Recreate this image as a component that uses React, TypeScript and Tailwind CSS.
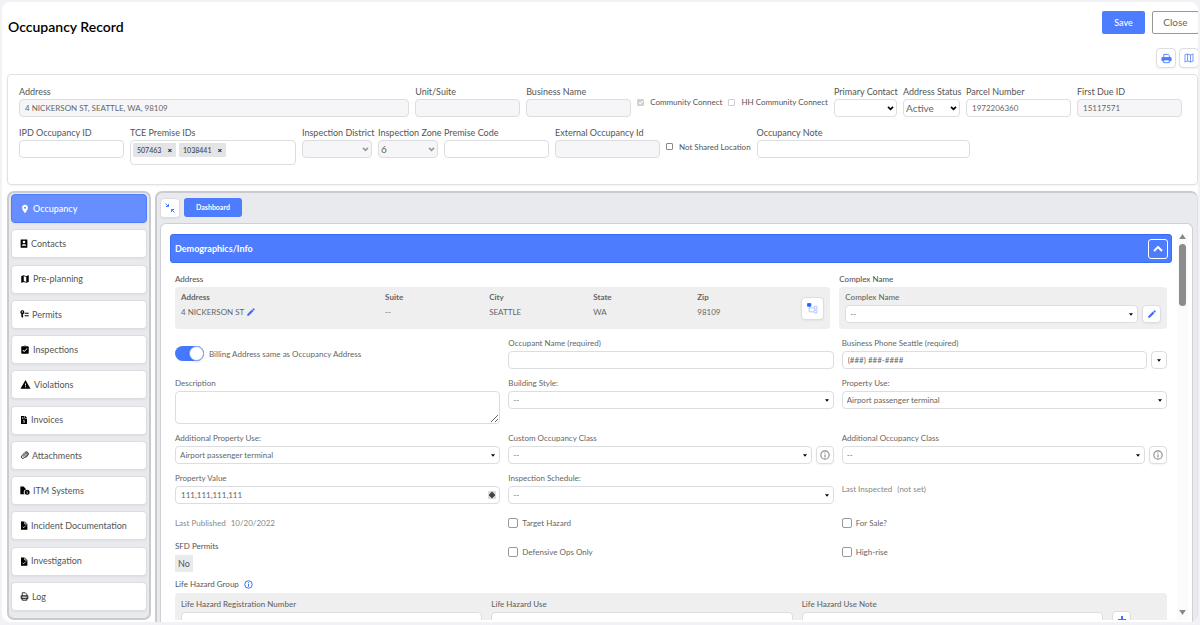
import { useId, useState } from 'react';
import type { ReactNode } from 'react';
import {
  MdAssignmentTurnedIn,
  MdEdit,
  MdLocationOn,
  MdMap,
  MdOutlineMap,
  MdWarning,
} from 'react-icons/md';
import { FaFileInvoiceDollar } from 'react-icons/fa';

const fieldBase = 'w-full rounded-[4px] border border-[#dcdde1] text-[#666] outline-none';

/* ---------- Icons ---------- */

function ContactIcon() {
  return (
    <svg viewBox="0 0 20 24" className="h-[9px] w-[8px]">
      <path d="M2 1h16a1 1 0 0 1 1 1v20a1 1 0 0 1-1 1H2a1 1 0 0 1-1-1V2a1 1 0 0 1 1-1z" fill="currentColor" />
      <circle cx="10" cy="8" r="3.500" fill="white" />
      <path d="M4 18c0-3 3-4 6-4s6 1 6 4z" fill="white" />
    </svg>
  );
}

function PermitIcon() {
  return (
    <svg viewBox="0 0 27 24" className="h-[8px] w-[9px]" fill="currentColor">
      <path d="M7 1a6 6 0 0 0-3 11.200V20l3 3 3-3-2-2 2-2-2-2 2-1.800A6 6 0 0 0 7 1Zm0 3a2 2 0 1 1 0 4 2 2 0 0 1 0-4Z" />
      <path d="M14 8h12v3H14zM14 16h12v3H14z" />
    </svg>
  );
}

function PaperclipIcon() {
  return (
    <svg viewBox="0 0 24 24" className="h-[9px] w-[9px]" fill="none" stroke="currentColor" strokeWidth="2.200">
      <path d="M8 15l8-9a2 2 0 0 1 3 3l-9 10a4 4 0 0 1-6-5l9-10a5 5 0 0 1 8 7l-6 7" />
    </svg>
  );
}

function SystemsIcon() {
  return (
    <svg viewBox="0 0 28 24" className="h-[9px] w-[10px]" fill="currentColor">
      <path d="M1 1h9l6 6v3a7 7 0 0 0-3 12.500H1z" />
      <path d="M20 10a7 7 0 1 0 0 14 7 7 0 0 0 0-14Zm-1 3h2v2h-2zm0 3h2v5h-2z" />
    </svg>
  );
}

function DocumentCheckIcon() {
  return (
    <svg viewBox="0 0 20 24" className="h-[9px] w-[8px]">
      <path d="M2 1h10l7 7v15H2z" fill="currentColor" />
      <path d="M6 15l3 3 6-6M12 1v7h7" fill="none" stroke="white" strokeWidth="2" />
    </svg>
  );
}

function LogIcon() {
  return (
    <svg viewBox="0 0 22 24" className="h-[9px] w-[9px]" fill="none" stroke="currentColor" strokeWidth="2">
      <path d="M5 10V2h8l4 4v4M5 18v4h12v-4" />
      <path d="M2 10h18v8H2z" fill="currentColor" fillOpacity="0.500" />
      <path d="M6 14h10" stroke="white" />
    </svg>
  );
}

function PrintIcon() {
  return (
    <svg viewBox="0 0 24 24" className="h-[11px] w-[11px]" fill="none" stroke="#4d7cff" strokeWidth="2">
      <path d="M6 9V3h10l2 2v4" />
      <path d="M2 10h20v7H2z" fill="#4d7cff" />
      <path d="M6 15h12v6H6z" fill="white" />
    </svg>
  );
}

function Caret({ className = '' }: { className?: string }) {
  return (
    <svg viewBox="0 0 6 4" className={`h-[3px] w-[4px] fill-black ${className}`}>
      <path d="M0 0h6L3 4z" />
    </svg>
  );
}

function InfoIcon({ className }: { className: string }) {
  return (
    <svg viewBox="0 0 18 18" className={className} fill="none" stroke="currentColor">
      <circle cx="9" cy="9" r="7.500" strokeWidth="2" />
      <path d="M9 8v5.500M9 4.500v2" strokeWidth="2" />
    </svg>
  );
}

/* ---------- Header fields ---------- */

interface HeaderFieldProps {
  label: string;
  width: string;
  value?: string;
  disabled?: boolean;
}

function HeaderInput({ label, width, value = '', disabled = false }: HeaderFieldProps) {
  const id = useId();
  return (
    <div className={width}>
      <label htmlFor={id} className="block text-[9px] leading-[14px] whitespace-nowrap text-[#555]">
        {label}
      </label>
      <input
        id={id}
        type="text"
        defaultValue={value}
        disabled={disabled}
        className={`${fieldBase} block h-[18px] px-[5px] text-[8px] ${
          disabled ? 'bg-[#f6f6f9] text-[#8a8d92]' : 'bg-white'
        }`}
      />
    </div>
  );
}

function HeaderSelect({ label, width, value = '', disabled = false }: HeaderFieldProps) {
  const id = useId();
  return (
    <div className={width}>
      <label htmlFor={id} className="block text-[9px] leading-[14px] whitespace-nowrap text-[#555]">
        {label}
      </label>
      <div className="relative">
        <select
          id={id}
          defaultValue={value}
          disabled={disabled}
          className={`${fieldBase} block h-[18px] appearance-none px-[2px] text-[10px] ${
            disabled ? 'bg-[#f6f6f9] text-[#8a8d92] opacity-100' : 'bg-white'
          }`}
        >
          <option value={value}>{value}</option>
        </select>
        <svg
          viewBox="0 0 8 6"
          className={`pointer-events-none absolute top-[7px] right-[3px] h-[5px] w-[7px] ${
            disabled ? 'text-[#999]' : 'text-black'
          }`}
          fill="none"
          stroke="currentColor"
          strokeWidth="2"
        >
          <path d="M1 1l3 3 3-3" />
        </svg>
      </div>
    </div>
  );
}

interface HeaderCheckProps {
  label: string;
  checked?: boolean;
  disabled?: boolean;
}

function HeaderCheck({ label, checked = false, disabled = false }: HeaderCheckProps) {
  return (
    <label className="flex items-center gap-[6px] self-center pt-[2px] text-[8px] leading-[12px] whitespace-nowrap text-[#555]">
      <span className="relative flex">
        <input
          type="checkbox"
          defaultChecked={checked}
          disabled={disabled}
          className={`h-[7px] w-[7px] appearance-none rounded-[1px] border ${
            disabled ? 'border-[#d0d0d0] checked:bg-[#d0d0d0]' : 'border-[#888]'
          }`}
        />
        {checked && (
          <svg viewBox="0 0 8 8" className="absolute inset-0 h-[7px] w-[7px]" fill="none" stroke="white" strokeWidth="1.200">
            <path d="M2 4l1.500 1.500L6.500 2.500" />
          </svg>
        )}
      </span>
      {label}
    </label>
  );
}

function PremiseIds() {
  const [ids, setIds] = useState(['507463', '1038441']);
  return (
    <div className="w-[166px]">
      <div className="text-[9px] leading-[14px] text-[#555]">TCE Premise IDs</div>
      <div className="flex h-[25px] gap-[3px] rounded-[4px] border border-[#dcdde1] p-[2px]">
        {ids.map((id) => (
          <span key={id} className="flex h-[14px] items-center gap-[6px] rounded-[1px] bg-[#e4e4e6] px-[4px] text-[7px] font-medium text-[#444]">
            {id}
            <button
              type="button"
              aria-label={`Remove ${id}`}
              onClick={() => setIds(ids.filter((other) => other !== id))}
              className="text-[8px] leading-none font-bold text-black"
            >
              ×
            </button>
          </span>
        ))}
      </div>
    </div>
  );
}

/* ---------- Form fields ---------- */

interface FormFieldProps {
  label: string;
  strong?: boolean;
  children: (id: string) => ReactNode;
}

function FormField({ label, strong = false, children }: FormFieldProps) {
  const id = useId();
  return (
    <div className="min-w-0">
      <label
        htmlFor={id}
        className={`mb-[3px] block text-[8px] leading-[10px] whitespace-nowrap text-[#666] ${
          strong ? 'font-medium' : ''
        }`}
      >
        {label}
      </label>
      {children(id)}
    </div>
  );
}

function FormSelect({ id, value = '--' }: { id: string; value?: string }) {
  return (
    <div className="relative min-w-0 flex-1">
      <select
        id={id}
        defaultValue={value}
        className={`${fieldBase} block h-[18px] appearance-none bg-white px-[4px] text-[8px]`}
      >
        <option value={value}>{value}</option>
      </select>
      <Caret className="pointer-events-none absolute top-[8px] right-[5px]" />
    </div>
  );
}

function InfoButton() {
  return (
    <button
      type="button"
      aria-label="Info"
      className="flex h-[18px] w-[18px] items-center justify-center rounded-[4px] border border-[#dcdde1] bg-white text-[#888] shadow-xs"
    >
      <InfoIcon className="h-[10px] w-[10px]" />
    </button>
  );
}

function FormCheck({ label }: { label: string }) {
  return (
    <label className="flex items-center gap-[4px] text-[8px] leading-[12px] text-[#666]">
      <input type="checkbox" className="h-[10px] w-[10px] appearance-none rounded-[2px] border border-[#999] bg-white" />
      {label}
    </label>
  );
}

/* ---------- Sections ---------- */

const menu = [
  { label: 'Occupancy', icon: <MdLocationOn size={10} />, active: true },
  { label: 'Contacts', icon: <ContactIcon /> },
  { label: 'Pre-planning', icon: <MdMap size={10} /> },
  { label: 'Permits', icon: <PermitIcon /> },
  { label: 'Inspections', icon: <MdAssignmentTurnedIn size={10} /> },
  { label: 'Violations', icon: <MdWarning size={11} /> },
  { label: 'Invoices', icon: <FaFileInvoiceDollar size={8} /> },
  { label: 'Attachments', icon: <PaperclipIcon /> },
  { label: 'ITM Systems', icon: <SystemsIcon /> },
  { label: 'Incident Documentation', icon: <DocumentCheckIcon /> },
  { label: 'Investigation', icon: <DocumentCheckIcon /> },
  { label: 'Log', icon: <LogIcon /> },
];

function Sidebar() {
  return (
    <nav className="mb-[2px] flex w-[144px] flex-none flex-col justify-between rounded-[7px] border-2 border-[#c9cbd0] bg-[#e9eaee] px-[2px] pt-[1px] pb-[7px]">
      {menu.map((item) => (
        <a
          key={item.label}
          href="#"
          className={`flex h-[29px] items-center gap-[3px] rounded-[4px] border px-[8px] text-[9px] shadow-xs ${
            item.active
              ? 'border-[#4d7cff] bg-[#668eff] font-medium text-white'
              : 'border-[#dcdde1] bg-white text-[#555]'
          }`}
        >
          <span className={item.active ? 'text-white' : 'text-black'}>{item.icon}</span>
          {item.label}
        </a>
      ))}
    </nav>
  );
}

function AddressSection() {
  const columns = [
    { title: 'Suite', value: '--' },
    { title: 'City', value: 'SEATTLE' },
    { title: 'State', value: 'WA' },
    { title: 'Zip', value: '98109' },
  ];
  return (
    <div className="flex gap-[9px]">
      <section className="min-w-0 flex-[2]">
        <h3 className="mb-[1px] text-[8px] leading-[14px] font-medium text-[#555]">Address</h3>
        <div className="flex h-[42px] rounded-[4px] bg-[#efefef] px-[6px] pt-[3px] text-[8px] text-[#666]">
          <dl className="grid flex-1 grid-cols-[204fr_104fr_104fr_104fr_104fr]">
            <div>
              <dt className="mb-[2px] leading-[14px] font-bold">Address</dt>
              <dd className="flex items-center gap-[2px] leading-[12px]">
                4 NICKERSON ST
                <MdEdit size={10} className="text-[#3f6fff]" />
              </dd>
            </div>
            {columns.map((column) => (
              <div key={column.title}>
                <dt className="mb-[2px] leading-[14px] font-bold">{column.title}</dt>
                <dd className="leading-[12px]">{column.value}</dd>
              </div>
            ))}
          </dl>
          <button
            type="button"
            aria-label="Show hierarchy"
            className="mt-[7px] flex h-[23px] w-[23px] items-center justify-center rounded-[4px] border border-[#dcdde1] bg-white shadow-xs"
          >
            <svg viewBox="0 0 20 20" className="h-[11px] w-[11px]" fill="none" stroke="#a9bcff" strokeWidth="1.500">
              <path d="M1 1h6v5H1z" fill="#2563ff" stroke="#2563ff" />
              <path d="M4 7v9h8M4 9h8M13 6h5v5h-5zM13 13h5v5h-5z" />
            </svg>
          </button>
        </div>
      </section>

      <section className="min-w-0 flex-1">
        <h3 className="mb-[1px] text-[8px] leading-[14px] font-medium text-[#555]">Complex Name</h3>
        <div className="h-[42px] rounded-[4px] bg-[#efefef] px-[6px] pt-[5px]">
          <FormField label="Complex Name" strong>
            {(id) => (
              <div className="flex gap-[4px]">
                <FormSelect id={id} />
                <button
                  type="button"
                  aria-label="Edit complex"
                  className="flex h-[18px] w-[19px] items-center justify-center rounded-[4px] border border-[#dcdde1] bg-white text-[#3f6fff] shadow-xs"
                >
                  <MdEdit size={10} />
                </button>
              </div>
            )}
          </FormField>
        </div>
      </section>
    </div>
  );
}

function LifeHazardSection() {
  return (
    <section>
      <h3 className="mb-[3px] flex items-center gap-[5px] text-[8px] leading-[12px] text-[#555]">
        Life Hazard Group
        <InfoIcon className="h-[9px] w-[9px] text-[#3f6fff]" />
      </h3>
      <div className="flex gap-[9px] rounded-[4px] bg-[#efefef] px-[6px] pt-[6px] pb-[12px]">
        <div className="grid flex-1 grid-cols-3 gap-[9px]">
          <FormField label="Life Hazard Registration Number" strong>
            {(id) => <input id={id} type="text" className={`${fieldBase} block h-[18px] bg-white px-[5px] text-[8px]`} />}
          </FormField>
          <FormField label="Life Hazard Use" strong>
            {(id) => <FormSelect id={id} value="" />}
          </FormField>
          <FormField label="Life Hazard Use Note" strong>
            {(id) => <input id={id} type="text" className={`${fieldBase} block h-[18px] bg-white px-[5px] text-[8px]`} />}
          </FormField>
        </div>
        <button
          type="button"
          aria-label="Add life hazard"
          className="mt-[12px] mr-[30px] flex h-[18px] w-[19px] items-center justify-center rounded-[4px] border border-[#dcdde1] bg-white"
        >
          <svg viewBox="0 0 8 8" className="h-[8px] w-[8px]" fill="none" stroke="#3f6fff" strokeWidth="2">
            <path d="M4 0v8M0 4h8" />
          </svg>
        </button>
      </div>
    </section>
  );
}

function OccupancyForm() {
  const [sameBilling, setSameBilling] = useState(true);
  return (
    <div className="grid grid-cols-3 gap-x-[8px] gap-y-[9px]">
      <label className="flex items-center gap-[5px] text-[8px] text-[#666]">
        <input
          type="checkbox"
          role="switch"
          checked={sameBilling}
          onChange={(e) => setSameBilling(e.target.checked)}
          className="peer sr-only"
        />
        <span className="flex h-[15px] w-[29px] items-center rounded-full bg-[#bbb] peer-checked:justify-end peer-checked:bg-[#4478ff]">
          <span className="h-[15px] w-[15px] rounded-full border border-[#8aa6e8] bg-white shadow-sm" />
        </span>
        Billing Address same as Occupancy Address
      </label>
      <FormField label="Occupant Name (required)">
        {(id) => <input id={id} type="text" className={`${fieldBase} block h-[18px] px-[5px] text-[8px]`} />}
      </FormField>
      <FormField label="Business Phone Seattle (required)">
        {(id) => (
          <div className="flex gap-[4px]">
            <input
              id={id}
              type="tel"
              placeholder="(###) ###-####"
              className={`${fieldBase} block h-[18px] flex-1 px-[5px] text-[8px] placeholder:text-[#666]`}
            />
            <button
              type="button"
              aria-label="Phone type"
              className="flex h-[18px] w-[16px] flex-none items-center justify-center rounded-[4px] border border-[#dcdde1]"
            >
              <Caret />
            </button>
          </div>
        )}
      </FormField>

      <FormField label="Description">
        {(id) => <textarea id={id} className={`${fieldBase} block h-[33px] px-[5px] text-[8px]`} />}
      </FormField>
      <FormField label="Building Style:">{(id) => <FormSelect id={id} />}</FormField>
      <FormField label="Property Use:">{(id) => <FormSelect id={id} value="Airport passenger terminal" />}</FormField>

      <FormField label="Additional Property Use:">
        {(id) => <FormSelect id={id} value="Airport passenger terminal" />}
      </FormField>
      <FormField label="Custom Occupancy Class">
        {(id) => (
          <div className="flex gap-[4px]">
            <FormSelect id={id} />
            <InfoButton />
          </div>
        )}
      </FormField>
      <FormField label="Additional Occupancy Class">
        {(id) => (
          <div className="flex gap-[4px]">
            <FormSelect id={id} />
            <InfoButton />
          </div>
        )}
      </FormField>

      <FormField label="Property Value">
        {(id) => (
          <div className="relative">
            <input
              id={id}
              type="text"
              defaultValue="111,111,111,111"
              className={`${fieldBase} block h-[18px] px-[5px] text-[8px]`}
            />
            <svg viewBox="0 0 8 8" className="absolute top-[5px] right-[4px] h-[8px] w-[8px]">
              <path d="M0 0h8v8H0z" fill="#ddd" />
              <path d="M4 0.500l3 3v1l-3 3-3-3v-1z" fill="#444" />
            </svg>
          </div>
        )}
      </FormField>
      <FormField label="Inspection Schedule:">{(id) => <FormSelect id={id} />}</FormField>
      <p className="flex items-center gap-[5px] text-[8px] text-[#888]">
        Last Inspected <span>(not set)</span>
      </p>
    </div>
  );
}

function FlagsSection() {
  return (
    <div className="grid grid-cols-3 gap-x-[8px] pt-[13px] pb-[6px]">
      <div>
        <p className="flex items-center gap-[5px] text-[8px] leading-[12px] text-[#888]">
          Last Published <span>10/20/2022</span>
        </p>
        <h3 className="mt-[11px] mb-[3px] text-[8px] leading-[12px] text-[#555]">SFD Permits</h3>
        <span className="block w-fit bg-[#e9eaee] px-[3px] text-[9px] leading-[17px] text-[#555]">No</span>
      </div>
      <div className="flex flex-col gap-[17px]">
        <FormCheck label="Target Hazard" />
        <FormCheck label="Defensive Ops Only" />
      </div>
      <div className="flex flex-col gap-[17px]">
        <FormCheck label="For Sale?" />
        <FormCheck label="High-rise" />
      </div>
    </div>
  );
}

export default function App() {
  const iconButton =
    'flex h-[20px] w-[20px] items-center justify-center rounded-[4px] border border-[#dcdde1] bg-white text-[#7a9bff] shadow-xs';

  return (
    <div className="h-screen bg-[#f1f1f6] p-[2px] pb-[3px] font-['Lato',sans-serif]">
      <main className="flex h-full flex-col overflow-hidden rounded-[8px] bg-white pl-[5px]">
        {/* Title and actions */}
        <header className="flex h-[72px] flex-none justify-between">
          <h1 className="mt-[15px] pl-[1px] text-[14px] leading-[20px] font-semibold text-black">Occupancy Record</h1>
          <div className="-mr-[1px] flex flex-col items-end">
            <div className="mt-[9px] flex gap-[7px]">
              <button type="button" className="h-[23px] w-[43px] rounded-[2px] bg-[#4d7cff] text-[9px] font-medium text-white">
                Save
              </button>
              <button type="button" className="h-[23px] w-[47px] rounded-[2px] border border-[#999] text-[10px] text-[#666]">
                Close
              </button>
            </div>
            <div className="mt-[14px] flex gap-[3px]">
              <button type="button" aria-label="Print" className={iconButton}>
                <PrintIcon />
              </button>
              <button type="button" aria-label="Map" className={iconButton}>
                <MdOutlineMap size={12} />
              </button>
            </div>
          </div>
        </header>

        {/* Record summary */}
        <section className="flex h-[111px] flex-none flex-col gap-[9px] rounded-[4px] border border-[#e0e1e4] pt-[10px] pr-[15px] pl-[11px] shadow-xs">
          <div className="flex items-start gap-[6px]">
            <HeaderInput label="Address" width="flex-1" value="4 NICKERSON ST, SEATTLE, WA, 98109" disabled />
            <HeaderInput label="Unit/Suite" width="w-[105px]" disabled />
            <HeaderInput label="Business Name" width="w-[105px]" disabled />
            <HeaderCheck label="Community Connect" checked disabled />
            <HeaderCheck label="HH Community Connect" disabled />
            <HeaderSelect label="Primary Contact" width="w-[63px]" />
            <HeaderSelect label="Address Status" width="w-[57px]" value="Active" />
            <HeaderInput label="Parcel Number" width="w-[105px]" value="1972206360" />
            <HeaderInput label="First Due ID" width="w-[105px]" value="15117571" disabled />
          </div>
          <div className="flex items-start gap-[6px]">
            <HeaderInput label="IPD Occupancy ID" width="w-[105px]" />
            <PremiseIds />
            <HeaderSelect label="Inspection District" width="w-[70px]" disabled />
            <HeaderSelect label="Inspection Zone" width="w-[60px]" value="6" disabled />
            <HeaderInput label="Premise Code" width="w-[105px]" />
            <HeaderInput label="External Occupancy Id" width="w-[105px]" disabled />
            <HeaderCheck label="Not Shared Location" />
            <HeaderInput label="Occupancy Note" width="w-[213px]" />
          </div>
        </section>

        <div className="mt-[6px] flex min-h-0 flex-1 gap-[4px]">
          <Sidebar />

          {/* Workspace */}
          <div className="flex min-w-0 flex-1 flex-col rounded-t-[7px] border-2 border-r border-b-0 border-[#c9cbd0] border-r-[#dfe0e5] bg-[#e9eaee] pt-[5px] pr-[4px] pl-[3px]">
            <div className="flex flex-none gap-[4px]">
              <button type="button" aria-label="Collapse" className={iconButton}>
                <svg viewBox="0 0 20 20" className="h-[10px] w-[10px]" fill="none" stroke="#4d7cff" strokeWidth="2">
                  <path d="M1 1l6 6M7 2v5H2M19 19l-6-6M13 18v-5h5" />
                </svg>
              </button>
              <button type="button" className="h-[19px] w-[58px] rounded-[3px] bg-[#4d7cff] text-[7px] font-bold text-white">
                Dashboard
              </button>
            </div>

            <div className="mt-[5px] flex min-h-0 flex-1 rounded-t-[6px] border border-b-0 border-[#cfd0d5] bg-white pt-[10px] pr-[4px] pb-[2px] pl-[9px]">
              <div className="min-w-0 flex-1 overflow-hidden">
                <h2 className="flex h-[29px] items-center justify-between rounded-[3px] border border-[#3a6cf5] bg-[#4d7cff] pr-[3px] pl-[4px] text-[9px] font-bold text-white">
                  Demographics/Info
                  <button
                    type="button"
                    aria-label="Collapse section"
                    className="flex h-[20px] w-[20px] items-center justify-center rounded-[3px] border border-white"
                  >
                    <svg viewBox="0 0 10 6" className="h-[6px] w-[10px]" fill="none" stroke="white" strokeWidth="2">
                      <path d="M1 5l4-4 4 4" />
                    </svg>
                  </button>
                </h2>
                <div className="px-[5px] pt-[9px]">
                  <AddressSection />
                  <div className="pt-[9px]">
                    <OccupancyForm />
                  </div>
                  <FlagsSection />
                  <LifeHazardSection />
                </div>
              </div>

              {/* Scroll track */}
              <div className="ml-[5px] flex w-[11px] flex-none flex-col items-center bg-[#fbfbfb] pb-[5px]">
                <svg viewBox="0 0 8 6" className="h-[5px] w-[7px] flex-none fill-[#888]">
                  <path d="M4 0l4 6H0z" />
                </svg>
                <div className="mt-[5px] h-[62px] w-[7px] flex-none rounded-full bg-[#8c8c8c]" />
                <svg viewBox="0 0 8 6" className="mt-auto h-[5px] w-[7px] flex-none fill-[#888]">
                  <path d="M0 0h8L4 6z" />
                </svg>
              </div>
            </div>
          </div>
        </div>
      </main>
    </div>
  );
}
